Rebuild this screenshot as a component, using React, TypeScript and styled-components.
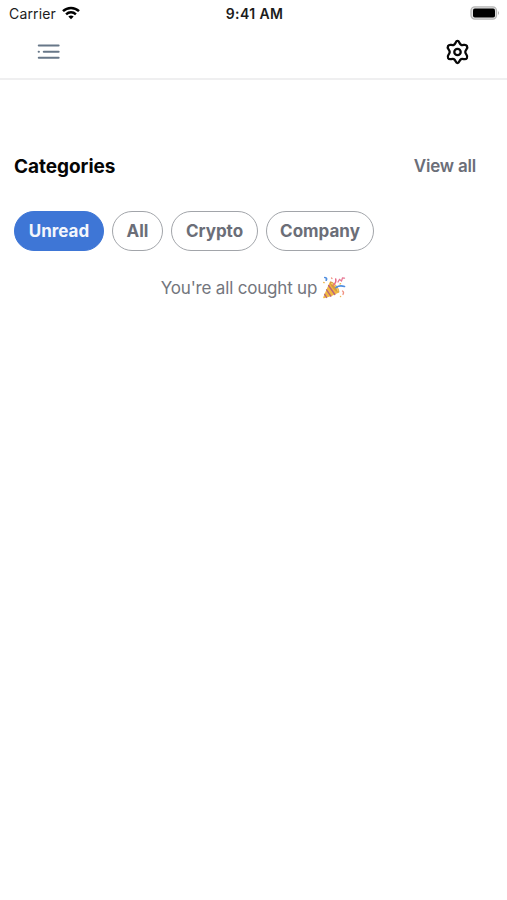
import React from "react";
import styled, { createGlobalStyle } from "styled-components";

const GlobalStyle = createGlobalStyle`
  * { box-sizing: border-box; }
  body { margin: 0; background: #fff; font-family: Inter, "Liberation Sans", sans-serif; }
`;

const Screen = styled.div`
  width: 100%;
  height: 900px;
  background: #fff;
  overflow: hidden;
`;

const StatusBar = styled.div`
  display: grid;
  grid-template-columns: 1fr auto 1fr;
  align-items: center;
  height: 28px;
  padding: 0 7px 0 9px;
  color: #1c1c1c;
  font-size: 14px;
  line-height: 28px;
`;

const Carrier = styled.div`
  display: flex;
  align-items: center;
  gap: 6px;
  letter-spacing: 0.15px;

  svg {
    margin-bottom: 2px;
  }
`;

const Clock = styled.div`
  font-weight: 600;
  letter-spacing: 0.4px;
`;

const BatterySlot = styled.div`
  display: flex;
  justify-content: flex-end;
  padding-bottom: 2px;
`;

const NavBar = styled.header`
  display: flex;
  align-items: center;
  justify-content: space-between;
  height: 52px;
  padding: 0 37px 2px;
  border-bottom: 2px solid #efeff0;
`;

const IconButton = styled.button`
  display: flex;
  padding: 0;
  border: 0;
  background: none;
`;

const SectionHead = styled.div`
  display: flex;
  align-items: center;
  justify-content: space-between;
  height: 30px;
  margin-top: 71px;
  padding: 0 31px 0 14px;
`;

const Title = styled.h1`
  margin: 0;
  color: #050505;
  font-size: 19px;
  font-weight: 700;
  letter-spacing: -0.04px;
`;

const ViewAll = styled.a`
  color: #6b6e78;
  font-size: 17px;
  font-weight: 600;
  letter-spacing: -0.2px;
`;

const Chips = styled.div`
  display: flex;
  gap: 8px;
  margin-top: 30px;
  padding-left: 14px;
`;

const Chip = styled.button<{ $width: number; $active?: boolean }>`
  width: ${(p) => p.$width}px;
  height: 40px;
  padding: 0;
  border: 1px solid ${(p) => (p.$active ? "#3e76d6" : "#a2a5aa")};
  border-radius: 20px;
  background: ${(p) => (p.$active ? "#3e76d6" : "#fff")};
  color: ${(p) => (p.$active ? "#f3f6fc" : "#6b6e78")};
  font-family: inherit;
  font-size: 17px;
  font-weight: 700;
  white-space: nowrap;
`;

const Empty = styled.div`
  display: flex;
  align-items: center;
  justify-content: center;
  gap: 5px;
  height: 28px;
  margin-top: 23px;
  color: #73767d;
  font-size: 17px;
  letter-spacing: -0.19px;
`;

const WifiIcon = () => (
  <svg width="18" height="14" viewBox="0 0 18 14" fill="none" stroke="#000" strokeWidth="2.5">
    <path d="M1 5.100C5.500.8 12.500.8 17 5.100" />
    <path d="M4.100 8.300C6.900 5.700 11.100 5.700 13.900 8.300" />
    <path d="M6.300 10.500Q9 8.300 11.700 10.500L9 13.300Z" fill="#000" stroke="none" />
  </svg>
);

const BatteryIcon = () => (
  <svg width="30" height="14" viewBox="0 0 30 14">
    <rect x="1" y="0.900" width="25.500" height="12.200" rx="3.800" fill="#e3e3e3" stroke="#b5b5b5" strokeWidth="1.300" />
    <rect x="3" y="2.600" width="22" height="9" rx="1.800" fill="#000" />
    <path d="M28 5Q30 7 28 9Z" fill="#b0b0b0" />
  </svg>
);

const MenuIcon = () => (
  <svg width="24" height="18" viewBox="0 0 24 18" stroke="#677788" strokeWidth="2.100" strokeLinecap="round">
    <path d="M1.800 2.500H21.600M6.800 8.700H21.600M1.800 14.800H21.600M1.700 8.700H1.900" />
  </svg>
);

const GearIcon = () => (
  <svg width="25" height="26" viewBox="0 0 25 26" fill="none" stroke="#080808" strokeWidth="2.300" strokeLinejoin="round">
    <path d="M12.500 1.900C14.600 1.900 14.100 5 16.200 5.900C18.300 6.800 20.400 4.600 21.900 6.900C23.500 9.600 20.300 10.300 20.300 13C20.300 15.700 23.500 16.400 21.900 19.100C20.400 21.400 18.300 19.200 16.200 20.100C14.100 21 14.600 24.100 12.500 24.100C10.400 24.100 10.900 21 8.800 20.100C6.700 19.200 4.600 21.400 3.100 19.100C1.500 16.400 4.700 15.700 4.700 13C4.700 10.300 1.500 9.600 3.100 6.900C4.600 4.600 6.700 6.800 8.800 5.900C10.900 5 10.400 1.900 12.500 1.900Z" />
    <circle cx="12.500" cy="13" r="3.200" />
  </svg>
);

const PartyIcon = () => (
  <svg width="24" height="24" viewBox="0 0 24 24" fill="none" strokeLinecap="round">
    <path d="M8 5.500L17 16.500Q10 20.500 2 22.300Q.700 22.500 1.300 21Z" fill="#f2b940" />
    <path d="M6.600 9.500L12.800 18.500M4.600 13.800L8.800 20.200M2.700 18.300L4.600 21.500" stroke="#b8657c" strokeWidth="1.400" />
    <path d="M8 5.500C11 4.500 18.500 13 17.200 16.500C14.500 17 7 9 8 5.500Z" fill="#d69a40" />
    <path d="M9.600 7.500C12 8 16 12.500 16 15" stroke="#f8cf62" strokeWidth="1.400" />
    <path d="M11.500 9Q14.500 6.500 13.700 3" stroke="#e76b87" strokeWidth="1.500" />
    <path d="M14 11.500Q17.500 9 22.500 10.500" stroke="#4f8ee0" strokeWidth="1.700" />
    <path d="M2.800 1.500Q5.500 2 4.200 4.200" stroke="#4f8ee0" strokeWidth="1.700" />
    <path d="M16 6L17.500 3.500L19.500 5L20.500 2L22.500 2.200" stroke="#e77995" strokeWidth="1.300" />
    <path d="M20.500 15Q22.300 16 21 18.500M9.500 2L10 2.500" stroke="#f09383" strokeWidth="1.300" />
    <path d="M1.700 6.500L2.200 6.600M18 8L18.500 7.700M18.500 20.500H18.600" stroke="#edb750" strokeWidth="1.400" />
  </svg>
);

const categories = [
  { label: "Unread", width: 90, active: true },
  { label: "All", width: 51 },
  { label: "Crypto", width: 87 },
  { label: "Company", width: 108 },
];

export default function App() {
  return (
    <Screen>
      <GlobalStyle />
      <StatusBar>
        <Carrier>Carrier <WifiIcon /></Carrier>
        <Clock>9:41 AM</Clock>
        <BatterySlot><BatteryIcon /></BatterySlot>
      </StatusBar>
      <NavBar>
        <IconButton aria-label="Menu"><MenuIcon /></IconButton>
        <IconButton aria-label="Settings"><GearIcon /></IconButton>
      </NavBar>
      <SectionHead>
        <Title>Categories</Title>
        <ViewAll>View all</ViewAll>
      </SectionHead>
      <Chips>
        {categories.map((c) => (
          <Chip key={c.label} $width={c.width} $active={c.active}>{c.label}</Chip>
        ))}
      </Chips>
      <Empty><span>You're all cought up</span><PartyIcon /></Empty>
    </Screen>
  );
}
